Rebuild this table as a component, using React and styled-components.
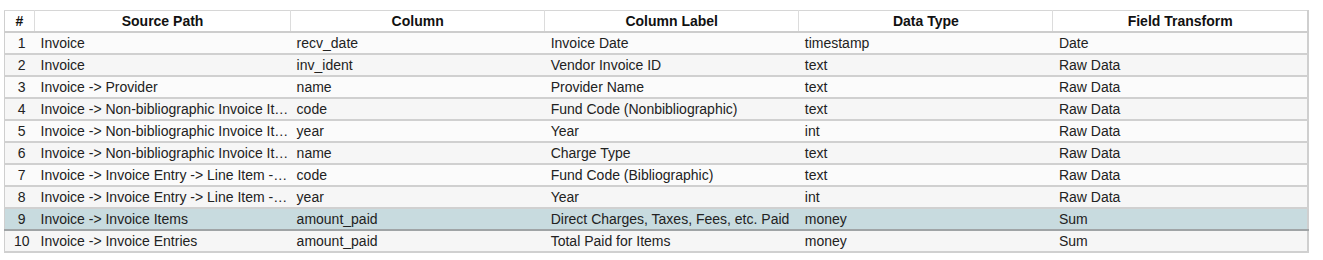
import React from 'react';
import styled, { createGlobalStyle } from 'styled-components';

const rows = [
  ['Invoice', 'recv_date', 'Invoice Date', 'timestamp', 'Date'],
  ['Invoice', 'inv_ident', 'Vendor Invoice ID', 'text', 'Raw Data'],
  ['Invoice -> Provider', 'name', 'Provider Name', 'text', 'Raw Data'],
  ['Invoice -> Non-bibliographic Invoice Items', 'code', 'Fund Code (Nonbibliographic)', 'text', 'Raw Data'],
  ['Invoice -> Non-bibliographic Invoice Items', 'year', 'Year', 'int', 'Raw Data'],
  ['Invoice -> Non-bibliographic Invoice Items', 'name', 'Charge Type', 'text', 'Raw Data'],
  ['Invoice -> Invoice Entry -> Line Item -> Fund', 'code', 'Fund Code (Bibliographic)', 'text', 'Raw Data'],
  ['Invoice -> Invoice Entry -> Line Item -> Fund', 'year', 'Year', 'int', 'Raw Data'],
  ['Invoice -> Invoice Items', 'amount_paid', 'Direct Charges, Taxes, Fees, etc. Paid', 'money', 'Sum'],
  ['Invoice -> Invoice Entries', 'amount_paid', 'Total Paid for Items', 'money', 'Sum'],
];

const headers = ['Source Path', 'Column', 'Column Label', 'Data Type', 'Field Transform'];
const widths = [30, 256, 254, 254, 254, 255];

const GlobalStyle = createGlobalStyle`
  body {
    margin: 0;
    background: #fff;
    font-family: "Liberation Sans", Arial, sans-serif;
  }
`;

const Page = styled.div`
  padding: 10px 14px 0 4px;
`;

const Grid = styled.table`
  width: 1305px;
  table-layout: fixed;
  border-collapse: collapse;
  border-left: 1px solid #cfcfcf;
  border-right: 2px solid #cfcfcf;
  border-top: 1px solid #d6d6d6;
  font-size: 14px;
  color: #222;
`;

const Col = styled.col`
  width: ${(p) => p.$w}px;
`;

const HeadCell = styled.th`
  height: 20px;
  padding: 0 6px;
  font-weight: bold;
  font-size: 14px;
  text-align: center;
  color: #111;
  background: #fff;
  border-left: 1px solid #dcdcdc;
  border-bottom: 2px solid #cdcdcd;
  &:first-child {
    border-left: none;
  }
`;

const Row = styled.tr`
  background: ${(p) => (p.$selected ? '#c8dbdf' : p.$even ? '#f6f6f6' : '#fbfbfb')};
  border-bottom: ${(p) => (p.$selected ? '2px solid #a0a4a6' : '2px solid #d0d0d0')};
`;

const Cell = styled.td`
  height: 20px;
  padding: 0 2px 0 6px;
  white-space: nowrap;
  overflow: hidden;
  text-overflow: ellipsis;
  text-align: ${(p) => (p.$center ? 'center' : 'left')};
`;

export default function App() {
  return (
    <Page>
      <GlobalStyle />
      <Grid>
        <colgroup>
          {widths.map((w, i) => (
            <Col key={i} $w={w} />
          ))}
        </colgroup>
        <thead>
          <tr>
            <HeadCell>#</HeadCell>
            {headers.map((h) => (
              <HeadCell key={h}>{h}</HeadCell>
            ))}
          </tr>
        </thead>
        <tbody>
          {rows.map((r, i) => (
            <Row key={i} $even={i % 2 === 1} $selected={i === 8}>
              <Cell $center>{i + 1}</Cell>
              {r.map((v, j) => (
                <Cell key={j}>{v}</Cell>
              ))}
            </Row>
          ))}
        </tbody>
      </Grid>
    </Page>
  );
}
